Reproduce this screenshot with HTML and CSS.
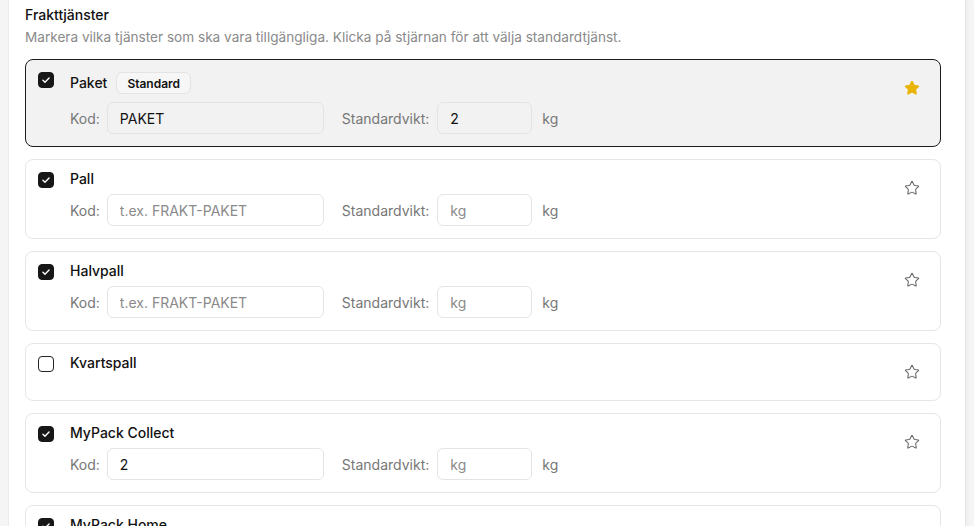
FILE: index.html
```html
<!DOCTYPE html>
<html lang="sv">
<head>
<meta charset="utf-8">
<title>Frakttjänster</title>
<link rel="stylesheet" href="styles.css">
</head>
<body>
<div class="panel">
  <h2 class="title">Frakttjänster</h2>
  <p class="subtitle">Markera vilka tjänster som ska vara tillgängliga. Klicka på stjärnan för att välja standardtjänst.</p>

  <div class="list">
    <div class="card selected">
      <span class="check on"><svg viewBox="0 0 16 16"><path d="M4.5 8.3l2.3 2.2 4.7-4.8"/></svg></span>
      <div class="body">
        <div class="name-row"><span class="name">Paket</span><span class="badge">Standard</span></div>
        <div class="fields">
          <span class="lbl">Kod:</span>
          <input class="inp code" value="PAKET">
          <span class="lbl lbl2">Standardvikt:</span>
          <input class="inp weight" value="2">
          <span class="lbl unit">kg</span>
        </div>
      </div>
      <button class="star-btn"><svg class="star filled" viewBox="0 0 24 24"><path d="M11.525 2.295a.53.53 0 0 1 .95 0l2.31 4.679a2.123 2.123 0 0 0 1.595 1.16l5.166.756a.53.53 0 0 1 .294.904l-3.736 3.638a2.123 2.123 0 0 0-.611 1.878l.882 5.14a.53.53 0 0 1-.771.56l-4.618-2.428a2.122 2.122 0 0 0-1.973 0L6.396 21.01a.53.53 0 0 1-.77-.56l.881-5.139a2.122 2.122 0 0 0-.611-1.879L2.16 9.795a.53.53 0 0 1 .294-.906l5.165-.755a2.122 2.122 0 0 0 1.597-1.16z"/></svg></button>
    </div>

    <div class="card">
      <span class="check on"><svg viewBox="0 0 16 16"><path d="M4.5 8.3l2.3 2.2 4.7-4.8"/></svg></span>
      <div class="body">
        <div class="name-row"><span class="name">Pall</span></div>
        <div class="fields">
          <span class="lbl">Kod:</span>
          <input class="inp code" placeholder="t.ex. FRAKT-PAKET">
          <span class="lbl lbl2">Standardvikt:</span>
          <input class="inp weight" placeholder="kg">
          <span class="lbl unit">kg</span>
        </div>
      </div>
      <button class="star-btn"><svg class="star" viewBox="0 0 24 24"><path d="M11.525 2.295a.53.53 0 0 1 .95 0l2.31 4.679a2.123 2.123 0 0 0 1.595 1.16l5.166.756a.53.53 0 0 1 .294.904l-3.736 3.638a2.123 2.123 0 0 0-.611 1.878l.882 5.14a.53.53 0 0 1-.771.56l-4.618-2.428a2.122 2.122 0 0 0-1.973 0L6.396 21.01a.53.53 0 0 1-.77-.56l.881-5.139a2.122 2.122 0 0 0-.611-1.879L2.16 9.795a.53.53 0 0 1 .294-.906l5.165-.755a2.122 2.122 0 0 0 1.597-1.16z"/></svg></button>
    </div>

    <div class="card">
      <span class="check on"><svg viewBox="0 0 16 16"><path d="M4.5 8.3l2.3 2.2 4.7-4.8"/></svg></span>
      <div class="body">
        <div class="name-row"><span class="name">Halvpall</span></div>
        <div class="fields">
          <span class="lbl">Kod:</span>
          <input class="inp code" placeholder="t.ex. FRAKT-PAKET">
          <span class="lbl lbl2">Standardvikt:</span>
          <input class="inp weight" placeholder="kg">
          <span class="lbl unit">kg</span>
        </div>
      </div>
      <button class="star-btn"><svg class="star" viewBox="0 0 24 24"><path d="M11.525 2.295a.53.53 0 0 1 .95 0l2.31 4.679a2.123 2.123 0 0 0 1.595 1.16l5.166.756a.53.53 0 0 1 .294.904l-3.736 3.638a2.123 2.123 0 0 0-.611 1.878l.882 5.14a.53.53 0 0 1-.771.56l-4.618-2.428a2.122 2.122 0 0 0-1.973 0L6.396 21.01a.53.53 0 0 1-.77-.56l.881-5.139a2.122 2.122 0 0 0-.611-1.879L2.16 9.795a.53.53 0 0 1 .294-.906l5.165-.755a2.122 2.122 0 0 0 1.597-1.16z"/></svg></button>
    </div>

    <div class="card">
      <span class="check"></span>
      <div class="body">
        <div class="name-row"><span class="name">Kvartspall</span></div>
      </div>
      <button class="star-btn"><svg class="star" viewBox="0 0 24 24"><path d="M11.525 2.295a.53.53 0 0 1 .95 0l2.31 4.679a2.123 2.123 0 0 0 1.595 1.16l5.166.756a.53.53 0 0 1 .294.904l-3.736 3.638a2.123 2.123 0 0 0-.611 1.878l.882 5.14a.53.53 0 0 1-.771.56l-4.618-2.428a2.122 2.122 0 0 0-1.973 0L6.396 21.01a.53.53 0 0 1-.77-.56l.881-5.139a2.122 2.122 0 0 0-.611-1.879L2.16 9.795a.53.53 0 0 1 .294-.906l5.165-.755a2.122 2.122 0 0 0 1.597-1.16z"/></svg></button>
    </div>

    <div class="card">
      <span class="check on"><svg viewBox="0 0 16 16"><path d="M4.5 8.3l2.3 2.2 4.7-4.8"/></svg></span>
      <div class="body">
        <div class="name-row"><span class="name">MyPack Collect</span></div>
        <div class="fields">
          <span class="lbl">Kod:</span>
          <input class="inp code" value="2">
          <span class="lbl lbl2">Standardvikt:</span>
          <input class="inp weight" placeholder="kg">
          <span class="lbl unit">kg</span>
        </div>
      </div>
      <button class="star-btn"><svg class="star" viewBox="0 0 24 24"><path d="M11.525 2.295a.53.53 0 0 1 .95 0l2.31 4.679a2.123 2.123 0 0 0 1.595 1.16l5.166.756a.53.53 0 0 1 .294.904l-3.736 3.638a2.123 2.123 0 0 0-.611 1.878l.882 5.14a.53.53 0 0 1-.771.56l-4.618-2.428a2.122 2.122 0 0 0-1.973 0L6.396 21.01a.53.53 0 0 1-.77-.56l.881-5.139a2.122 2.122 0 0 0-.611-1.879L2.16 9.795a.53.53 0 0 1 .294-.906l5.165-.755a2.122 2.122 0 0 0 1.597-1.16z"/></svg></button>
    </div>

    <div class="card">
      <span class="check on"><svg viewBox="0 0 16 16"><path d="M4.5 8.3l2.3 2.2 4.7-4.8"/></svg></span>
      <div class="body">
        <div class="name-row"><span class="name">MyPack Home</span></div>
        <div class="fields">
          <span class="lbl">Kod:</span>
          <input class="inp code" placeholder="t.ex. FRAKT-PAKET">
          <span class="lbl lbl2">Standardvikt:</span>
          <input class="inp weight" placeholder="kg">
          <span class="lbl unit">kg</span>
        </div>
      </div>
      <button class="star-btn"><svg class="star" viewBox="0 0 24 24"><path d="M11.525 2.295a.53.53 0 0 1 .95 0l2.31 4.679a2.123 2.123 0 0 0 1.595 1.16l5.166.756a.53.53 0 0 1 .294.904l-3.736 3.638a2.123 2.123 0 0 0-.611 1.878l.882 5.14a.53.53 0 0 1-.771.56l-4.618-2.428a2.122 2.122 0 0 0-1.973 0L6.396 21.01a.53.53 0 0 1-.77-.56l.881-5.139a2.122 2.122 0 0 0-.611-1.879L2.16 9.795a.53.53 0 0 1 .294-.906l5.165-.755a2.122 2.122 0 0 0 1.597-1.16z"/></svg></button>
    </div>
  </div>
</div>
</body>
</html>
```

FILE: styles.css
```css
* { box-sizing: border-box; }

html, body {
  margin: 0;
  padding: 0;
  background: #f5f5f5;
  font-family: Inter, "Noto Sans", "Liberation Sans", sans-serif;
  color: #111;
  overflow: hidden;
}

.panel {
  margin-left: 8px;
  width: 958px;
  min-height: 560px;
  background: #fff;
  border-left: 1px solid #ececec;
  border-right: 1px solid #e4e4e4;
  padding: 5px 24px 20px 16px;
  box-shadow: 2px 0 4px rgba(0,0,0,0.03);
}

.title {
  margin: 0;
  font-size: 14px;
  line-height: 20px;
  font-weight: 500;
  color: #111;
}

.subtitle {
  margin: 2px 0 0;
  font-size: 13.6px;
  line-height: 20px;
  color: #8a8a8a;
}

.list {
  margin-top: 12px;
  display: flex;
  flex-direction: column;
  gap: 12px;
}

.card {
  display: flex;
  align-items: flex-start;
  gap: 16px;
  padding: 12px;
  border: 1px solid #e6e6e6;
  border-radius: 8px;
  background: #fff;
}

.card.selected {
  background: #f2f2f2;
  border-color: #1c1c1c;
}

.check {
  flex: none;
  width: 16px;
  height: 16px;
  border-radius: 4px;
  border: 1px solid #222;
  background: #fff;
  display: flex;
  align-items: center;
  justify-content: center;
}

.check.on {
  background: #171717;
  border-color: #171717;
}

.check svg {
  width: 14px;
  height: 14px;
  fill: none;
  stroke: #fff;
  stroke-width: 1.6;
  stroke-linecap: round;
  stroke-linejoin: round;
}

.body {
  flex: 1;
  display: flex;
  flex-direction: column;
  gap: 8px;
}

.name-row {
  display: flex;
  align-items: center;
  gap: 8px;
}

.name {
  font-size: 14px;
  line-height: 14px;
  font-weight: 500;
  color: #111;
}

.badge {
  height: 22px;
  display: inline-flex;
  align-items: center;
  padding: 0 10px;
  margin-left: 1px;
  font-size: 12px;
  font-weight: 600;
  color: #111;
  background: #f6f6f6;
  border: 1px solid #e3e3e3;
  border-radius: 6px;
}

.fields {
  display: flex;
  align-items: center;
  gap: 7px;
}

.lbl {
  font-size: 14px;
  color: #777;
}

.lbl2 { margin-left: 11px; }
.inp.weight { margin-left: 1px; }
.unit { margin-left: 3px; }

.inp {
  height: 32px;
  padding: 0 12px;
  border: 1px solid #e4e4e4;
  border-radius: 6px;
  background: transparent;
  font-family: inherit;
  font-size: 14px;
  color: #111;
  outline: none;
}

.inp::placeholder { color: #8a8a8a; }

.inp.code { width: 217px; }
.inp.weight { width: 95px; }

.star-btn {
  flex: none;
  width: 32px;
  height: 32px;
  padding: 0;
  border: none;
  background: transparent;
  display: flex;
  align-items: center;
  justify-content: center;
}

.star {
  width: 16px;
  height: 16px;
  fill: none;
  stroke: #6b6b6b;
  stroke-width: 1.6;
  stroke-linejoin: round;
}

.star.filled {
  fill: #eab308;
  stroke: #eab308;
}
```
